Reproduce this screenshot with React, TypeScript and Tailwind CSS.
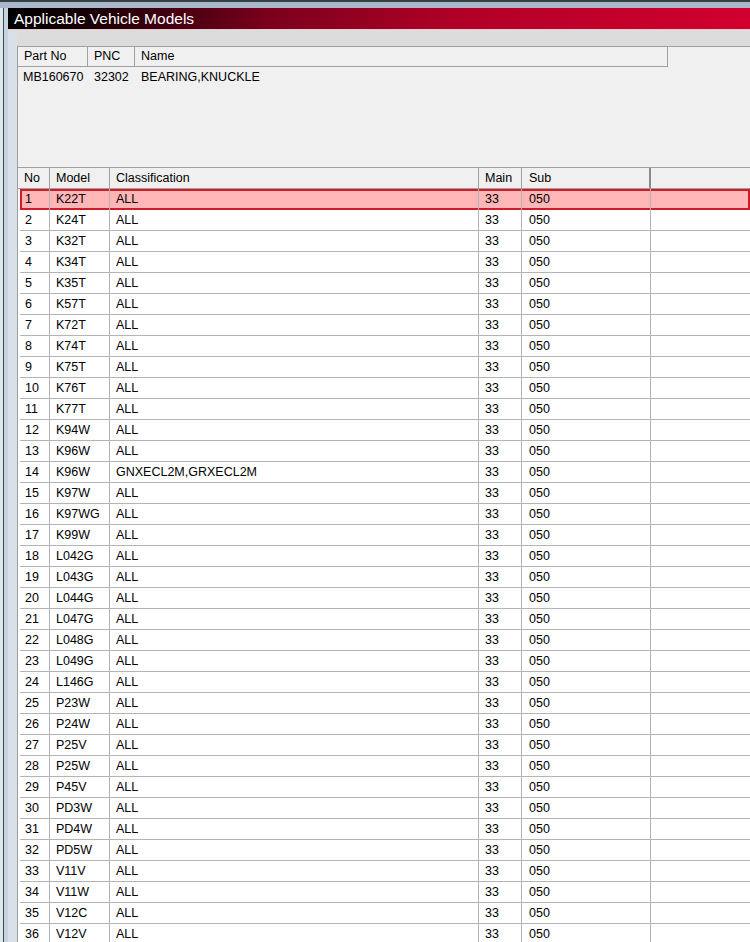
const rows: [string, string][] = [
  ["K22T", "ALL"], ["K24T", "ALL"], ["K32T", "ALL"], ["K34T", "ALL"], ["K35T", "ALL"],
  ["K57T", "ALL"], ["K72T", "ALL"], ["K74T", "ALL"], ["K75T", "ALL"], ["K76T", "ALL"],
  ["K77T", "ALL"], ["K94W", "ALL"], ["K96W", "ALL"], ["K96W", "GNXECL2M,GRXECL2M"],
  ["K97W", "ALL"], ["K97WG", "ALL"], ["K99W", "ALL"], ["L042G", "ALL"], ["L043G", "ALL"],
  ["L044G", "ALL"], ["L047G", "ALL"], ["L048G", "ALL"], ["L049G", "ALL"], ["L146G", "ALL"],
  ["P23W", "ALL"], ["P24W", "ALL"], ["P25V", "ALL"], ["P25W", "ALL"], ["P45V", "ALL"],
  ["PD3W", "ALL"], ["PD4W", "ALL"], ["PD5W", "ALL"], ["V11V", "ALL"], ["V11W", "ALL"],
  ["V12C", "ALL"], ["V12V", "ALL"],
];

function HeaderCell({ w, children }: { w: string; children?: React.ReactNode }) {
  return (
    <div className={`${w} h-full shrink-0 border-r border-[#a0a0a0] pl-[6px] flex items-center`}>
      {children}
    </div>
  );
}

export default function App() {
  return (
    <div
      className="w-[750px] h-[942px] overflow-hidden bg-[#dcdcdc] text-[12.5px] text-black"
      style={{ fontFamily: '"Liberation Sans", Arial, sans-serif' }}
    >
      {/* window frame top */}
      <div className="h-[2px] bg-[#34403f]" />
      <div className="h-[6px] bg-[#a9b9cb]" />

      <div className="flex h-full">
        {/* window frame left */}
        <div className="w-[8px] shrink-0 flex">
          <div className="w-[3px] bg-[#dfe7ef]" />
          <div className="w-[1px] bg-[#3c4650]" />
          <div className="w-[4px] bg-[#c6d3e0]" />
        </div>

        <div className="flex-1 min-w-0">
          {/* title bar */}
          <div className="h-[21px] flex items-center pl-[6px] text-white text-[15.5px] bg-[linear-gradient(to_right,#000000_0%,#1a0006_12%,#7a001c_35%,#b00026_60%,#d2002e_100%)]">
            Applicable Vehicle Models
          </div>
          <div className="h-[1px] bg-[#ecc8d0]" />

          <div className="flex">
            <div className="w-[9px] shrink-0 bg-[#d9dfe6]" />
            <div className="flex-1 min-w-0">
              <div className="h-[16px]" />

              {/* part list */}
              <div className="h-[121px] bg-[#f0f0f0] border-t border-l border-[#a0a0a0]">
                <div className="h-[20px] flex">
                  <div className="flex h-full border-b border-[#a0a0a0]">
                    <HeaderCell w="w-[70px]">Part No</HeaderCell>
                    <HeaderCell w="w-[47px]">PNC</HeaderCell>
                    <HeaderCell w="w-[533px]">Name</HeaderCell>
                  </div>
                </div>
                <div className="h-[21px] flex items-center">
                  <div className="w-[70px] pl-[5px]">MB160670</div>
                  <div className="w-[47px] pl-[6px]">32302</div>
                  <div className="pl-[6px]">BEARING,KNUCKLE</div>
                </div>
              </div>

              {/* vehicle table */}
              <div className="bg-white border-t border-l border-[#a0a0a0]">
                <div className="h-[21px] flex bg-[#f0f0f0] border-b border-[#a0a0a0]">
                  <HeaderCell w="w-[32px]">No</HeaderCell>
                  <HeaderCell w="w-[60px]">Model</HeaderCell>
                  <HeaderCell w="w-[369px]">Classification</HeaderCell>
                  <HeaderCell w="w-[43px]">Main</HeaderCell>
                  <div className="w-[129px] h-full shrink-0 border-r-2 border-[#8a8a8a] pl-[7px] flex items-center">
                    Sub
                  </div>
                  <div className="flex-1" />
                </div>

                {rows.map(([model, cls], i) => {
                  const sel = i === 0;
                  return (
                    <div
                      key={i}
                      className={
                        sel
                          ? "h-[21px] flex items-center bg-[#ffb6b6] shadow-[inset_0_0_0_2px_#d01c28] ml-[2px]"
                          : "h-[21px] flex items-center border-b border-[#b4b4b4] ml-[2px]"
                      }
                    >
                      <div className="w-[30px] h-full shrink-0 pl-[5px] flex items-center border-r border-[#b4b4b4]">
                        {i + 1}
                      </div>
                      <div className="w-[60px] h-full shrink-0 pl-[6px] flex items-center border-r border-[#b4b4b4]">
                        {model}
                      </div>
                      <div className="w-[369px] h-full shrink-0 pl-[6px] flex items-center border-r border-[#b4b4b4]">
                        {cls}
                      </div>
                      <div className="w-[43px] h-full shrink-0 pl-[6px] flex items-center border-r border-[#b4b4b4]">
                        33
                      </div>
                      <div className="w-[129px] h-full shrink-0 pl-[7px] flex items-center border-r border-[#b4b4b4]">
                        050
                      </div>
                      <div className="flex-1" />
                    </div>
                  );
                })}
              </div>
            </div>
          </div>
        </div>
      </div>
    </div>
  );
}
